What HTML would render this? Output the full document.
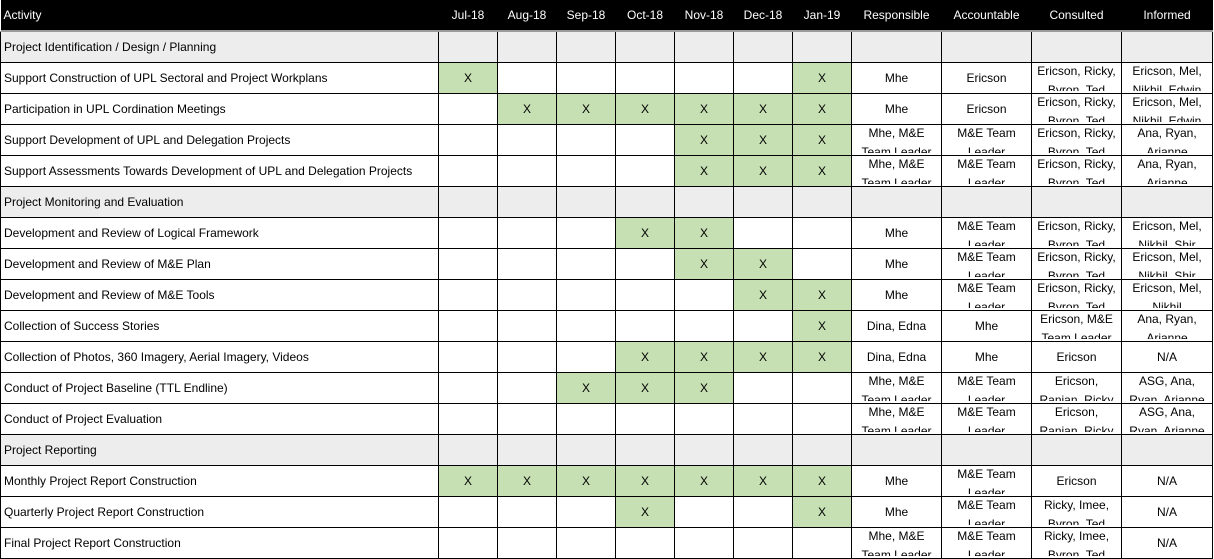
<!DOCTYPE html>
<html><head><meta charset="utf-8"><style>
*{margin:0;padding:0;box-sizing:border-box}
body{width:1214px;height:559px;overflow:hidden;background:#fff;font-family:"Liberation Sans",Arial,sans-serif;font-size:12px;color:#000}
table{border-collapse:collapse;table-layout:fixed;width:1212px}
td,th{border:1px solid #000;height:31px;padding:0;text-align:center;overflow:hidden;white-space:nowrap;font-weight:normal;vertical-align:middle}
th{background:#000;color:#fff;border:none;border-bottom:1px solid #9a9a9a;height:31px;box-shadow:inset 0 -1px 0 #9a9a9a}
th.a,td.a{text-align:left;padding-left:3px}
tr.s td{background:#ededed}
td.g{background:#c6e0b4}
.w{height:29px;overflow:hidden;white-space:normal;line-height:19px;margin-top:-2px;padding:0 2px}
</style></head><body>
<table>
<colgroup><col style="width:438px"><col style="width:59px"><col style="width:59px"><col style="width:59px"><col style="width:59px"><col style="width:59px"><col style="width:59px"><col style="width:59px"><col style="width:90px"><col style="width:90px"><col style="width:90px"><col style="width:91px"></colgroup>
<tr><th class="a">Activity</th><th>Jul-18</th><th>Aug-18</th><th>Sep-18</th><th>Oct-18</th><th>Nov-18</th><th>Dec-18</th><th>Jan-19</th><th>Responsible</th><th>Accountable</th><th>Consulted</th><th>Informed</th></tr>
<tr class="s"><td class="a">Project Identification / Design / Planning</td><td></td><td></td><td></td><td></td><td></td><td></td><td></td><td></td><td></td><td></td><td></td></tr>
<tr><td class="a">Support Construction of UPL Sectoral and Project Workplans</td><td class="g">X</td><td></td><td></td><td></td><td></td><td></td><td class="g">X</td><td>Mhe</td><td>Ericson</td><td><div class="w">Ericson, Ricky, Byron, Ted</div></td><td><div class="w">Ericson, Mel, Nikhil, Edwin</div></td></tr>
<tr><td class="a">Participation in UPL Cordination Meetings</td><td></td><td class="g">X</td><td class="g">X</td><td class="g">X</td><td class="g">X</td><td class="g">X</td><td class="g">X</td><td>Mhe</td><td>Ericson</td><td><div class="w">Ericson, Ricky, Byron, Ted</div></td><td><div class="w">Ericson, Mel, Nikhil, Edwin</div></td></tr>
<tr><td class="a">Support Development of UPL and Delegation Projects</td><td></td><td></td><td></td><td></td><td class="g">X</td><td class="g">X</td><td class="g">X</td><td><div class="w">Mhe, M&amp;E Team Leader</div></td><td><div class="w">M&amp;E Team Leader</div></td><td><div class="w">Ericson, Ricky, Byron, Ted</div></td><td><div class="w">Ana, Ryan, Arianne</div></td></tr>
<tr><td class="a">Support Assessments Towards Development of UPL and Delegation Projects</td><td></td><td></td><td></td><td></td><td class="g">X</td><td class="g">X</td><td class="g">X</td><td><div class="w">Mhe, M&amp;E Team Leader</div></td><td><div class="w">M&amp;E Team Leader</div></td><td><div class="w">Ericson, Ricky, Byron, Ted</div></td><td><div class="w">Ana, Ryan, Arianne</div></td></tr>
<tr class="s"><td class="a">Project Monitoring and Evaluation</td><td></td><td></td><td></td><td></td><td></td><td></td><td></td><td></td><td></td><td></td><td></td></tr>
<tr><td class="a">Development and Review of Logical Framework</td><td></td><td></td><td></td><td class="g">X</td><td class="g">X</td><td></td><td></td><td>Mhe</td><td><div class="w">M&amp;E Team Leader</div></td><td><div class="w">Ericson, Ricky, Byron, Ted</div></td><td><div class="w">Ericson, Mel, Nikhil, Shir</div></td></tr>
<tr><td class="a">Development and Review of M&amp;E Plan</td><td></td><td></td><td></td><td></td><td class="g">X</td><td class="g">X</td><td></td><td>Mhe</td><td><div class="w">M&amp;E Team Leader</div></td><td><div class="w">Ericson, Ricky, Byron, Ted</div></td><td><div class="w">Ericson, Mel, Nikhil, Shir</div></td></tr>
<tr><td class="a">Development and Review of M&amp;E Tools</td><td></td><td></td><td></td><td></td><td></td><td class="g">X</td><td class="g">X</td><td>Mhe</td><td><div class="w">M&amp;E Team Leader</div></td><td><div class="w">Ericson, Ricky, Byron, Ted</div></td><td><div class="w">Ericson, Mel, Nikhil</div></td></tr>
<tr><td class="a">Collection of Success Stories</td><td></td><td></td><td></td><td></td><td></td><td></td><td class="g">X</td><td>Dina, Edna</td><td>Mhe</td><td><div class="w">Ericson, M&amp;E Team Leader</div></td><td><div class="w">Ana, Ryan, Arianne</div></td></tr>
<tr><td class="a">Collection of Photos, 360 Imagery, Aerial Imagery, Videos</td><td></td><td></td><td></td><td class="g">X</td><td class="g">X</td><td class="g">X</td><td class="g">X</td><td>Dina, Edna</td><td>Mhe</td><td>Ericson</td><td>N/A</td></tr>
<tr><td class="a">Conduct of Project Baseline (TTL Endline)</td><td></td><td></td><td class="g">X</td><td class="g">X</td><td class="g">X</td><td></td><td></td><td><div class="w">Mhe, M&amp;E Team Leader</div></td><td><div class="w">M&amp;E Team Leader</div></td><td><div class="w">Ericson, Ranjan, Ricky</div></td><td><div class="w">ASG, Ana, Ryan, Arianne</div></td></tr>
<tr><td class="a">Conduct of Project Evaluation</td><td></td><td></td><td></td><td></td><td></td><td></td><td></td><td><div class="w">Mhe, M&amp;E Team Leader</div></td><td><div class="w">M&amp;E Team Leader</div></td><td><div class="w">Ericson, Ranjan, Ricky</div></td><td><div class="w">ASG, Ana, Ryan, Arianne</div></td></tr>
<tr class="s"><td class="a">Project Reporting</td><td></td><td></td><td></td><td></td><td></td><td></td><td></td><td></td><td></td><td></td><td></td></tr>
<tr><td class="a">Monthly Project Report Construction</td><td class="g">X</td><td class="g">X</td><td class="g">X</td><td class="g">X</td><td class="g">X</td><td class="g">X</td><td class="g">X</td><td>Mhe</td><td><div class="w">M&amp;E Team Leader</div></td><td>Ericson</td><td>N/A</td></tr>
<tr><td class="a">Quarterly Project Report Construction</td><td></td><td></td><td></td><td class="g">X</td><td></td><td></td><td class="g">X</td><td>Mhe</td><td><div class="w">M&amp;E Team Leader</div></td><td><div class="w">Ricky, Imee, Byron, Ted</div></td><td>N/A</td></tr>
<tr><td class="a">Final Project Report Construction</td><td></td><td></td><td></td><td></td><td></td><td></td><td></td><td><div class="w">Mhe, M&amp;E Team Leader</div></td><td><div class="w">M&amp;E Team Leader</div></td><td><div class="w">Ricky, Imee, Byron, Ted</div></td><td>N/A</td></tr>
</table>
</body></html>
